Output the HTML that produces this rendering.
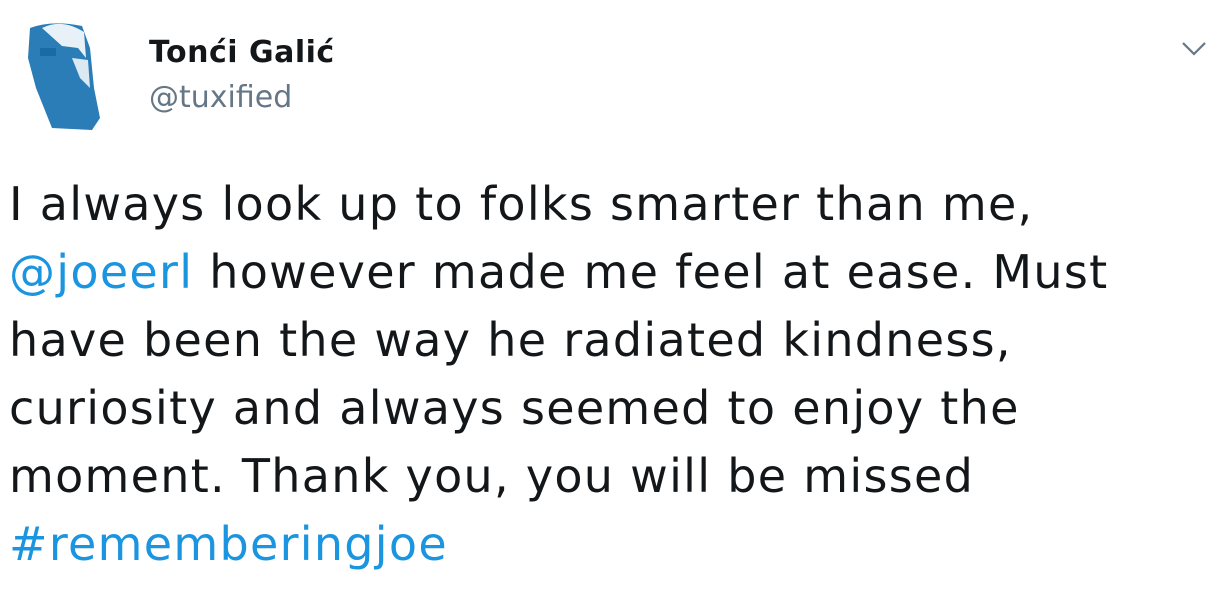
<!DOCTYPE html>
<html><head><style>
body{margin:0;background:#fff;width:1220px;height:590px;overflow:hidden;font-family:"DejaVu Sans","Liberation Sans",sans-serif;}
.av{position:absolute;left:22px;top:18px;width:88px;height:112px;}
.name{position:absolute;left:149px;top:35px;font-size:30px;font-weight:bold;color:#14171a;letter-spacing:0.5px}
.handle{position:absolute;left:149px;top:80px;font-size:30px;color:#657786;}
.chev{position:absolute;left:1181px;top:40px;}
.txt{position:absolute;left:9px;top:170px;font-size:46px;line-height:68px;color:#14171a;white-space:nowrap;letter-spacing:1.3px}
a{color:#1b95e0;text-decoration:none}
</style></head><body>
<svg class="av" viewBox="0 0 88 112">
<path d="M8 10 Q30 2 60 8 L68 30 L72 70 L78 100 L70 112 L30 110 L22 90 L14 70 L6 40 Z" fill="#2a7db6"/>
<path d="M20 10 Q40 0 62 14 L64 40 L56 30 L40 28 Z" fill="#e8f1f8"/>
<path d="M50 40 L66 42 L68 70 L58 60 Z" fill="#dbe9f3"/>
<rect x="18" y="30" width="16" height="8" fill="#1a6aa4"/>
</svg>
<div class="name">Tonći Galić</div>
<div class="handle">@tuxified</div>
<svg class="chev" width="26" height="18" viewBox="0 0 26 18"><path d="M2 3 L13 14 L24 3" fill="none" stroke="#657786" stroke-width="2.2"/></svg>
<div class="txt">I always look up to folks smarter than me,<br><a>@joeerl</a> however made me feel at ease. Must<br>have been the way he radiated kindness,<br>curiosity and always seemed to enjoy the<br>moment. Thank you, you will be missed<br><a>#rememberingjoe</a></div>
</body></html>
